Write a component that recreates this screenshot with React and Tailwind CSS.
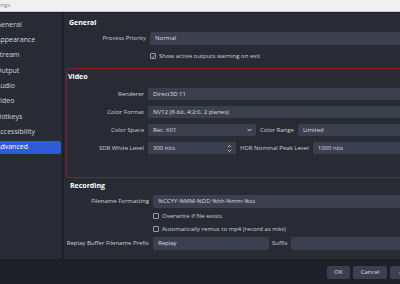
import React from "react";

const font = { fontFamily: '"Open Sans", "Noto Sans", sans-serif' };

function Arrow() {
  return (
    <svg width="5" height="4" viewBox="0 0 5 4" className="shrink-0">
      <path d="M0.5 1 L2.5 3 L4.5 1" fill="none" stroke="#d6d8e0" strokeWidth="1" />
    </svg>
  );
}

function Spin() {
  return (
    <svg width="5" height="9" viewBox="0 0 5 9" className="shrink-0">
      <path d="M0.8 3.2 L2.5 1.5 L4.2 3.2" fill="none" stroke="#c8cad3" strokeWidth="0.9" />
      <path d="M0.8 5.8 L2.5 7.5 L4.2 5.8" fill="none" stroke="#c8cad3" strokeWidth="0.9" />
    </svg>
  );
}

function Input({ text, w, h = "h-[12px]", arrow, spin, grow }) {
  return (
    <div
      className={`${h} ${w || ""} ${grow ? "flex-1" : "shrink-0"} bg-[#3c3f4d] rounded-[2px] flex items-center pl-[5px] pr-[4px] text-[6px] text-[#dcdde3]`}
    >
      <span className="flex-1 whitespace-nowrap overflow-hidden">{text}</span>
      {arrow && <Arrow />}
      {spin && <Spin />}
    </div>
  );
}

function Check({ checked, label }) {
  return (
    <div className="flex items-center gap-[3px] text-[6px] text-[#cfd1d9] whitespace-nowrap">
      <div className="w-[6px] h-[6px] border border-[#9a9ca6] rounded-[1px] flex items-center justify-center">
        {checked && (
          <svg width="5" height="5" viewBox="0 0 5 5">
            <path d="M0.8 2.6 L2 3.8 L4.3 1" fill="none" stroke="#d8dae2" strokeWidth="0.8" />
          </svg>
        )}
      </div>
      <span>{label}</span>
    </div>
  );
}

function Label({ children, w }) {
  return (
    <div className={`${w} shrink-0 text-right text-[6px] text-[#cfd1d9] whitespace-nowrap pr-[4px]`}>
      {children}
    </div>
  );
}

export default function App() {
  const items = [
    "General",
    "Appearance",
    "Stream",
    "Output",
    "Audio",
    "Video",
    "Hotkeys",
    "Accessibility",
    "Advanced",
  ];
  return (
    <div
      className="w-[400px] h-[284px] overflow-hidden bg-[#1e2028] flex flex-col"
      style={font}
    >
      {/* title bar */}
      <div className="h-[12px] shrink-0 bg-[#f0f0f0] border-b border-[#c9c9c9] flex items-center overflow-hidden">
        <span className="text-[6px] text-[#8a8a8a] -ml-[12px]">Settings</span>
      </div>

      <div className="flex mt-[1px] gap-[2px] h-[246px] shrink-0 w-[420px]">
        {/* sidebar */}
        <div className="w-[62px] shrink-0 bg-[#282b34] rounded-r-[2px] pt-[5.5px] flex flex-col gap-[2.3px] overflow-hidden">
          {items.map((it) => (
            <div
              key={it}
              className={`h-[13px] flex items-center text-[7px] whitespace-nowrap mr-[1px] rounded-r-[2px] ${
                it === "Advanced" ? "bg-[#2e5bd8] text-white" : "text-[#d3d5dc]"
              }`}
            >
              <span className="-ml-[4px]">{it}</span>
            </div>
          ))}
        </div>

        {/* main panel */}
        <div className="w-[352px] shrink-0 bg-[#282b34] rounded-l-[2px] pt-[4px] pl-[2px] flex flex-col">
          {/* General */}
          <div className="h-[12px] flex items-center pl-[3px] text-[7px] font-bold text-white">General</div>
          <div className="flex items-center mt-[3px]">
            <Label w="w-[84px]">Process Priority</Label>
            <Input text="Normal" h="h-[13px]" grow arrow />
          </div>
          <div className="flex items-center mt-[5px] h-[12px]">
            <div className="w-[84px] shrink-0" />
            <Check checked label="Show active outputs warning on exit" />
          </div>

          {/* Video box */}
          <div className="mt-[6px] border border-[#8d1f2e] rounded-[3px] pt-[2px] pb-[23px] pr-[1px]">
            <div className="h-[12px] flex items-center pl-[1px] text-[7px] font-bold text-white">Video</div>
            <div className="flex items-center mt-[5px]">
              <Label w="w-[81px]">Renderer</Label>
              <Input text="Direct3D 11" grow arrow />
            </div>
            <div className="flex items-center mt-[6px]">
              <Label w="w-[81px]">Color Format</Label>
              <Input text="NV12 (8-bit, 4:2:0, 2 planes)" grow arrow />
            </div>
            <div className="flex items-center mt-[6px]">
              <Label w="w-[81px]">Color Space</Label>
              <Input text="Rec. 601" w="w-[108px]" arrow />
              <div className="text-[6px] text-[#cfd1d9] whitespace-nowrap px-[4px]">Color Range</div>
              <Input text="Limited" grow arrow />
            </div>
            <div className="flex items-center mt-[6px]">
              <Label w="w-[81px]">SDR White Level</Label>
              <Input text="300 nits" w="w-[88px]" spin />
              <div className="text-[6px] text-[#cfd1d9] whitespace-nowrap px-[4px]">HDR Nominal Peak Level</div>
              <Input text="1000 nits" grow spin />
            </div>
          </div>

          {/* Recording */}
          <div className="h-[12px] mt-[2px] flex items-center pl-[4px] text-[7px] font-bold text-white">Recording</div>
          <div className="flex items-center mt-[3px]">
            <Label w="w-[87px]">Filename Formatting</Label>
            <Input text="%CCYY-%MM-%DD %hh-%mm-%ss" h="h-[13px]" grow />
          </div>
          <div className="flex items-center mt-[3px] h-[10px]">
            <div className="w-[87px] shrink-0" />
            <Check label="Overwrite if file exists" />
          </div>
          <div className="flex items-center mt-[3px] h-[10px]">
            <div className="w-[87px] shrink-0" />
            <Check label="Automatically remux to mp4 (record as mkv)" />
          </div>
          <div className="flex items-center mt-[3px]">
            <Label w="w-[87px]">Replay Buffer Filename Prefix</Label>
            <Input text="Replay" h="h-[13px]" w="w-[116px]" />
            <div className="text-[6px] text-[#cfd1d9] whitespace-nowrap px-[3px]">Suffix</div>
            <Input text="" h="h-[13px]" grow />
          </div>
        </div>
      </div>

      {/* buttons */}
      <div className="flex justify-end gap-[3px] mt-[7px] w-[424px]">
        {["OK", "Cancel", "Apply"].map((b) => (
          <div
            key={b}
            className={`h-[13px] shrink-0 ${b === "OK" ? "w-[23px]" : "w-[34px]"} bg-[#3c3f4d] rounded-[2px] flex items-center justify-center text-[6px] text-[#dcdde3]`}
          >
            {b}
          </div>
        ))}
      </div>
    </div>
  );
}
